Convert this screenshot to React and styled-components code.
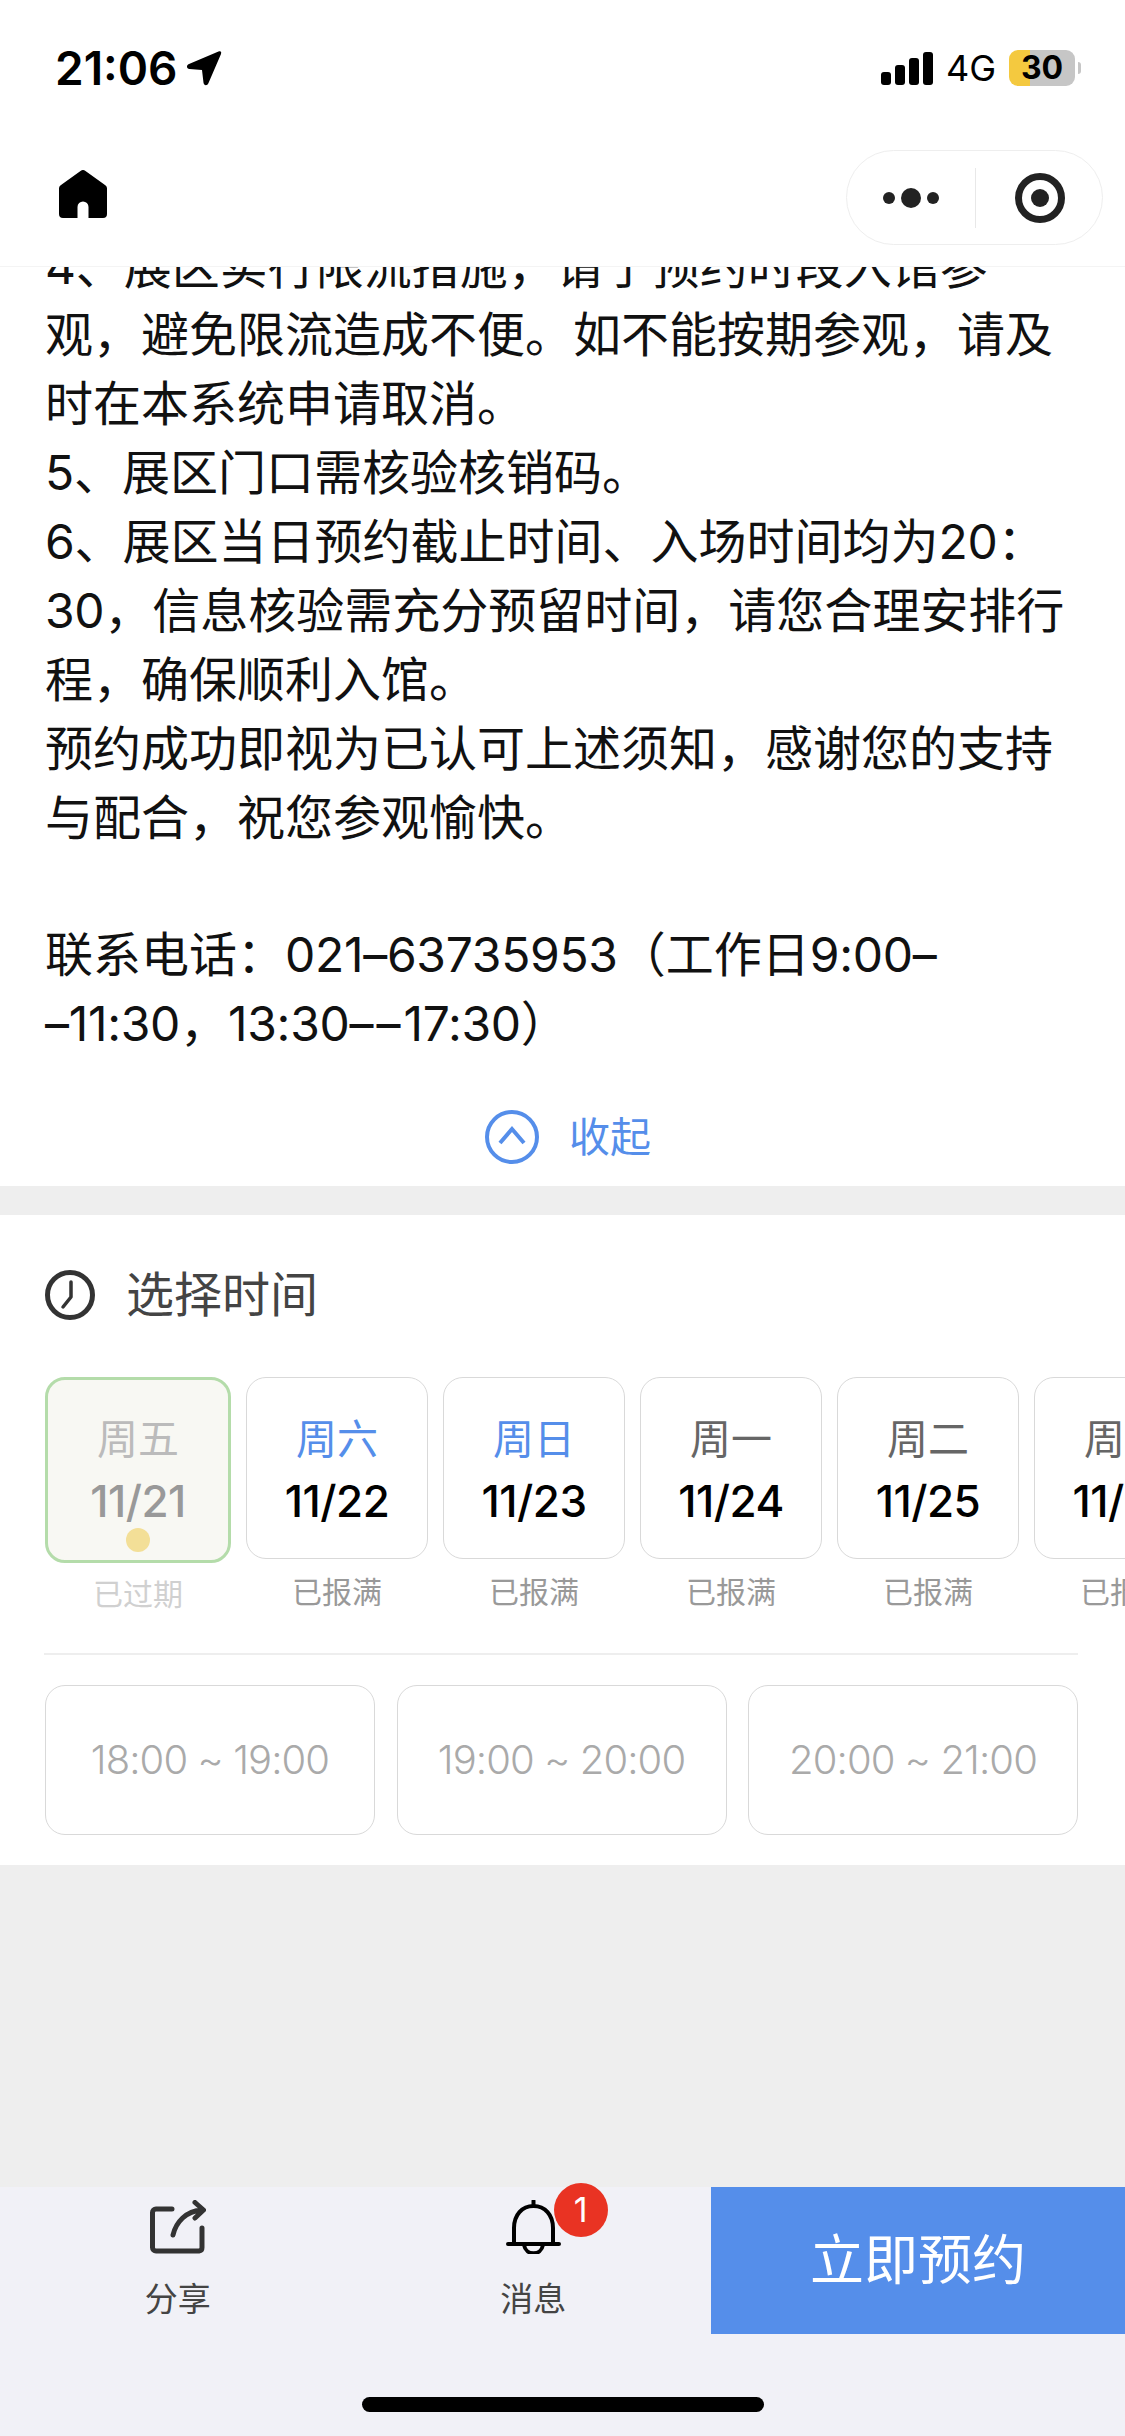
import React from "react";
import styled, { createGlobalStyle } from "styled-components";

const noticeLines = [
  "4、展区实行限流措施，请于预约时段入馆参",
  "观，避免限流造成不便。如不能按期参观，请及",
  "时在本系统申请取消。",
  "5、展区门口需核验核销码。",
  "6、展区当日预约截止时间、入场时间均为20：",
  "30，信息核验需充分预留时间，请您合理安排行",
  "程，确保顺利入馆。",
  "预约成功即视为已认可上述须知，感谢您的支持",
  "与配合，祝您参观愉快。",
  "",
  "联系电话：021–63735953（工作日9:00–",
  "–11:30，13:30––17:30）",
];

const days = [
  { week: "周五", date: "11/21", status: "已过期", state: "past" },
  { week: "周六", date: "11/22", status: "已报满", state: "weekend" },
  { week: "周日", date: "11/23", status: "已报满", state: "weekend" },
  { week: "周一", date: "11/24", status: "已报满" },
  { week: "周二", date: "11/25", status: "已报满" },
  { week: "周三", date: "11/26", status: "已报满" },
];

const slots = ["18:00 ~ 19:00", "19:00 ~ 20:00", "20:00 ~ 21:00"];

// digits run a little narrower than the Han text around them
const withNumbers = (line) =>
  line.split(/(––|–|[0-9:]+)/).map((part, i) => {
    if (part === "––") return <DoubleDash key={i}>{part}</DoubleDash>;
    return i % 2 ? <Num key={i}>{part}</Num> : part;
  });

const App = () => {
  return (
    <Page>
      <GlobalStyle />
      <Top>
        <StatusBar>
          <StatusLeft>
            <Clock>21:06</Clock>
            <svg width="36" height="36" viewBox="0 0 36 36">
              <path d="M32.5 1.5C35 .8 35.6 2 35 4L22.5 33c-1.2 3-4.5 3-5-.2L16 20 3.5 19c-3.2-.5-3.4-4-.5-5z" fill="#000" />
            </svg>
          </StatusLeft>
          <StatusRight>
            <Signal>
              <Bar $h={13} />
              <Bar $h={20} />
              <Bar $h={27} />
              <Bar $h={33} />
            </Signal>
            <Network>4G</Network>
            <Battery>
              <BatteryBody>30</BatteryBody>
              <BatteryNub />
            </Battery>
          </StatusRight>
        </StatusBar>
        <NavBar>
          <svg width="48" height="48" viewBox="0 0 48 48">
            <path d="M21.5 1a4 4 0 0 1 5 0L46 15a4 4 0 0 1 2 3v26a4 4 0 0 1-4 4H29.500V37a5.500 5.500 0 0 0-11 0v11H4a4 4 0 0 1-4-4V18a4 4 0 0 1 2-3z" fill="#000" />
          </svg>
          <Capsule>
            <Dots>
              <Dot $size={12} />
              <Dot $size={20} />
              <Dot $size={12} />
            </Dots>
            <CapsuleLine />
            <svg width="50" height="50" viewBox="0 0 50 50">
              <circle cx="25" cy="25" r="21.500" fill="none" stroke="#222" strokeWidth="7" />
              <circle cx="25" cy="25" r="9" fill="#222" />
            </svg>
          </Capsule>
        </NavBar>
      </Top>

      <Notice>
        <NoticeText>
          {noticeLines.map((line, i) => (
            <NoticeLine key={i}>{withNumbers(line)}</NoticeLine>
          ))}
        </NoticeText>
        <Collapse>
          <svg width="54" height="54" viewBox="0 0 54 54">
            <circle cx="27" cy="27" r="25" fill="none" stroke="#558eea" strokeWidth="4" />
            <path d="M15 33 L27 19 L39 33" fill="none" stroke="#558eea" strokeWidth="4" />
          </svg>
          <span>收起</span>
        </Collapse>
      </Notice>

      <TimeSection>
        <SectionTitle>
          <svg width="50" height="50" viewBox="0 0 50 50">
            <circle cx="25" cy="25" r="22.500" fill="none" stroke="#333" strokeWidth="5" />
            <path d="M26 12 V27 L18 37" fill="none" stroke="#333" strokeWidth="3.500" strokeLinecap="round" strokeLinejoin="round" />
          </svg>
          <span>选择时间</span>
        </SectionTitle>
        <DayRow>
          {days.map((d) => (
            <DayColumn key={d.date}>
              <DayCard $past={d.state === "past"}>
                <WeekLabel $state={d.state}>{d.week}</WeekLabel>
                <DateLabel $past={d.state === "past"}>{d.date}</DateLabel>
                {d.state === "past" && <TodayDot />}
              </DayCard>
              <StatusLabel $past={d.state === "past"}>{d.status}</StatusLabel>
            </DayColumn>
          ))}
        </DayRow>
        <Divider />
        <SlotRow>
          {slots.map((s) => (
            <Slot key={s}>{s}</Slot>
          ))}
        </SlotRow>
      </TimeSection>

      <Spacer />

      <BottomBar>
        <ActionRow>
          <Action>
            <svg width="56" height="54" viewBox="0 0 56 54">
              <path d="M22 9H6a3.500 3.500 0 0 0-3.500 3.500v35A3.500 3.500 0 0 0 6 51h43a3.500 3.500 0 0 0 3-3.500V28" fill="none" stroke="#333" strokeWidth="5" strokeLinecap="round" />
              <path d="M23 35C26 22 36 11 52 10M45 2.500L53.500 10L45 18" fill="none" stroke="#333" strokeWidth="5" strokeLinecap="round" strokeLinejoin="round" />
            </svg>
            <ActionLabel>分享</ActionLabel>
          </Action>
          <Action>
            <BellWrap>
              <svg width="55" height="54" viewBox="0 0 55 54">
                <path d="M2 44H53M8 44V28C8 15 16 6 27.500 6C39 6 47 15 47 28V44M18 45C20 56 35 56 37 45M27.500 1V6" fill="none" stroke="#000" strokeWidth="4" strokeLinecap="round" />
              </svg>
              <Badge>1</Badge>
            </BellWrap>
            <ActionLabel>消息</ActionLabel>
          </Action>
          <BookButton>立即预约</BookButton>
        </ActionRow>
        <HomeIndicator />
      </BottomBar>
    </Page>
  );
};

export default App;

const GlobalStyle = createGlobalStyle`
  html, body {
    margin: 0;
    padding: 0;
    background: #fff;
  }
  * {
    box-sizing: border-box;
  }
`;

const Page = styled.div`
  width: 1125px;
  height: 2436px;
  display: flex;
  flex-direction: column;
  overflow: hidden;
  background: #eee;
  font-family: Inter, "Noto Sans CJK SC", sans-serif;
`;

const Top = styled.header`
  background: #fff;
  border-bottom: 1px solid #f4f4f4;
`;

const StatusBar = styled.div`
  height: 136px;
  padding: 0 44px 0 55px;
  display: flex;
  align-items: center;
  justify-content: space-between;
`;

const StatusLeft = styled.div`
  display: flex;
  align-items: center;
  gap: 8px;
`;

const Clock = styled.span`
  font-size: 46px;
  font-weight: 600;
  color: #000;
`;

const StatusRight = styled.div`
  display: flex;
  align-items: center;
`;

const Signal = styled.div`
  display: flex;
  align-items: flex-end;
  gap: 4px;
  height: 33px;
`;

const Bar = styled.i`
  display: block;
  width: 10px;
  height: ${(p) => p.$h}px;
  border-radius: 3px;
  background: #000;
`;

const Network = styled.span`
  margin-left: 13px;
  font-size: 36px;
  color: #000;
`;

const Battery = styled.div`
  margin-left: 13px;
  display: flex;
  align-items: center;
  gap: 3px;
`;

const BatteryBody = styled.div`
  width: 66px;
  height: 36px;
  border-radius: 9px;
  background: linear-gradient(to right, #f4c93f 32%, #c6c6c6 32%);
  color: #000;
  font-size: 32px;
  font-weight: 700;
  line-height: 36px;
  text-align: center;
`;

const BatteryNub = styled.i`
  display: block;
  width: 3px;
  height: 12px;
  border-radius: 0 3px 3px 0;
  background: #c6c6c6;
`;

const NavBar = styled.div`
  height: 130px;
  padding: 14px 22px 0 59px;
  display: flex;
  justify-content: space-between;
  align-items: flex-start;
  & > svg {
    margin-top: 20px;
  }
`;

const Capsule = styled.div`
  width: 257px;
  height: 95px;
  padding-left: 36px;
  border: 1px solid #eee;
  border-radius: 48px;
  display: flex;
  align-items: center;
`;

const Dots = styled.div`
  display: flex;
  align-items: center;
  gap: 6px;
`;

const Dot = styled.i`
  display: block;
  width: ${(p) => p.$size}px;
  height: ${(p) => p.$size}px;
  border-radius: 50%;
  background: #222;
`;

const CapsuleLine = styled.i`
  display: block;
  width: 1px;
  height: 60px;
  margin: 0 39px 0 36px;
  background: #e8e8e8;
`;

const Notice = styled.section`
  background: #fff;
  overflow: hidden;
  padding-bottom: 22px;
`;

const NoticeText = styled.div`
  margin-top: -34.5px;
  padding-left: 45px;
  color: #111;
  font-size: 48px;
  line-height: 68.9px;
`;

const NoticeLine = styled.div`
  height: 68.9px;
  white-space: nowrap;
`;

const Num = styled.span`
  letter-spacing: -0.3px;
  font-feature-settings: "calt" 0;
`;

const DoubleDash = styled.span`
  letter-spacing: 3px;
  font-feature-settings: "calt" 0;
`;

const Collapse = styled.div`
  margin-top: 50.5px;
  padding-left: 11px;
  display: flex;
  align-items: center;
  justify-content: center;
  gap: 30px;
  color: #558eea;
  font-size: 41px;
  line-height: 54px;
`;

const TimeSection = styled.section`
  margin-top: 29px;
  padding: 55px 0 30px;
  background: #fff;
`;

const SectionTitle = styled.h2`
  margin: 0 0 57px;
  padding-left: 45px;
  display: flex;
  align-items: center;
  gap: 31px;
  height: 50px;
  color: #444;
  font-size: 48px;
  font-weight: 400;
  span {
    padding-bottom: 8px;
  }
`;

const DayRow = styled.div`
  padding-left: 45px;
  display: flex;
  align-items: flex-start;
  gap: 15px;
  overflow: hidden;
`;

const DayColumn = styled.div`
  flex: none;
  display: flex;
  flex-direction: column;
  align-items: center;
`;

const DayCard = styled.div`
  position: relative;
  width: ${(p) => (p.$past ? 186 : 182)}px;
  height: ${(p) => (p.$past ? 186 : 182)}px;
  padding-top: ${(p) => (p.$past ? 37 : 39)}px;
  border: ${(p) => (p.$past ? "3px solid #b4dcaa" : "1px solid #d9d9d9")};
  border-radius: 20px;
  background: ${(p) => (p.$past ? "#f8f8f3" : "#fff")};
  display: flex;
  flex-direction: column;
  align-items: center;
`;

const WeekLabel = styled.div`
  height: 44px;
  font-size: 41px;
  line-height: 44px;
  color: ${(p) =>
    p.$state === "past" ? "#bbb" : p.$state === "weekend" ? "#558eea" : "#666"};
`;

const DateLabel = styled.div`
  margin-top: 18px;
  height: 44px;
  font-size: 44px;
  font-weight: 500;
  line-height: 44px;
  letter-spacing: -0.5px;
  color: ${(p) => (p.$past ? "#999" : "#000")};
`;

const TodayDot = styled.i`
  position: absolute;
  left: 50%;
  bottom: 8px;
  width: 24px;
  height: 24px;
  margin-left: -12px;
  border-radius: 50%;
  background: #f3df97;
`;

const StatusLabel = styled.div`
  margin-top: ${(p) => (p.$past ? 11 : 13)}px;
  height: 40px;
  font-size: 30px;
  line-height: 40px;
  color: ${(p) => (p.$past ? "#d0d0d0" : "#999")};
`;

const Divider = styled.div`
  margin: 39px 47px 30px 44px;
  height: 2px;
  background: #eee;
`;

const SlotRow = styled.div`
  padding-left: 45px;
  display: flex;
  gap: 21.5px;
`;

const Slot = styled.div`
  flex: none;
  width: 330px;
  height: 150px;
  border: 1px solid #d9d9d9;
  border-radius: 20px;
  display: flex;
  align-items: center;
  justify-content: center;
  color: #aaa;
  font-size: 40px;
  font-weight: 300;
  letter-spacing: -0.9px;
`;

const Spacer = styled.div`
  flex: 1;
`;

const BottomBar = styled.footer`
  height: 249px;
  background: #f1f1f7;
`;

const ActionRow = styled.div`
  height: 147px;
  display: flex;
`;

const Action = styled.div`
  flex: 1;
  padding-top: 13px;
  display: flex;
  flex-direction: column;
  align-items: center;
`;

const BellWrap = styled.div`
  position: relative;
  height: 54px;
`;

const Badge = styled.span`
  position: absolute;
  top: -17px;
  left: 48px;
  width: 54px;
  height: 54px;
  border-radius: 50%;
  background: #e93323;
  color: #fff;
  font-size: 34px;
  line-height: 54px;
  text-align: center;
`;

const ActionLabel = styled.span`
  margin-top: 23px;
  color: #444;
  font-size: 33px;
  line-height: 44px;
`;

const BookButton = styled.div`
  flex: none;
  width: 414px;
  background: #558eea;
  color: #fff;
  font-size: 54px;
  line-height: 147px;
  text-align: center;
`;

const HomeIndicator = styled.div`
  width: 402px;
  height: 15px;
  margin: 63px 0 0 362px;
  border-radius: 8px;
  background: #000;
`;
